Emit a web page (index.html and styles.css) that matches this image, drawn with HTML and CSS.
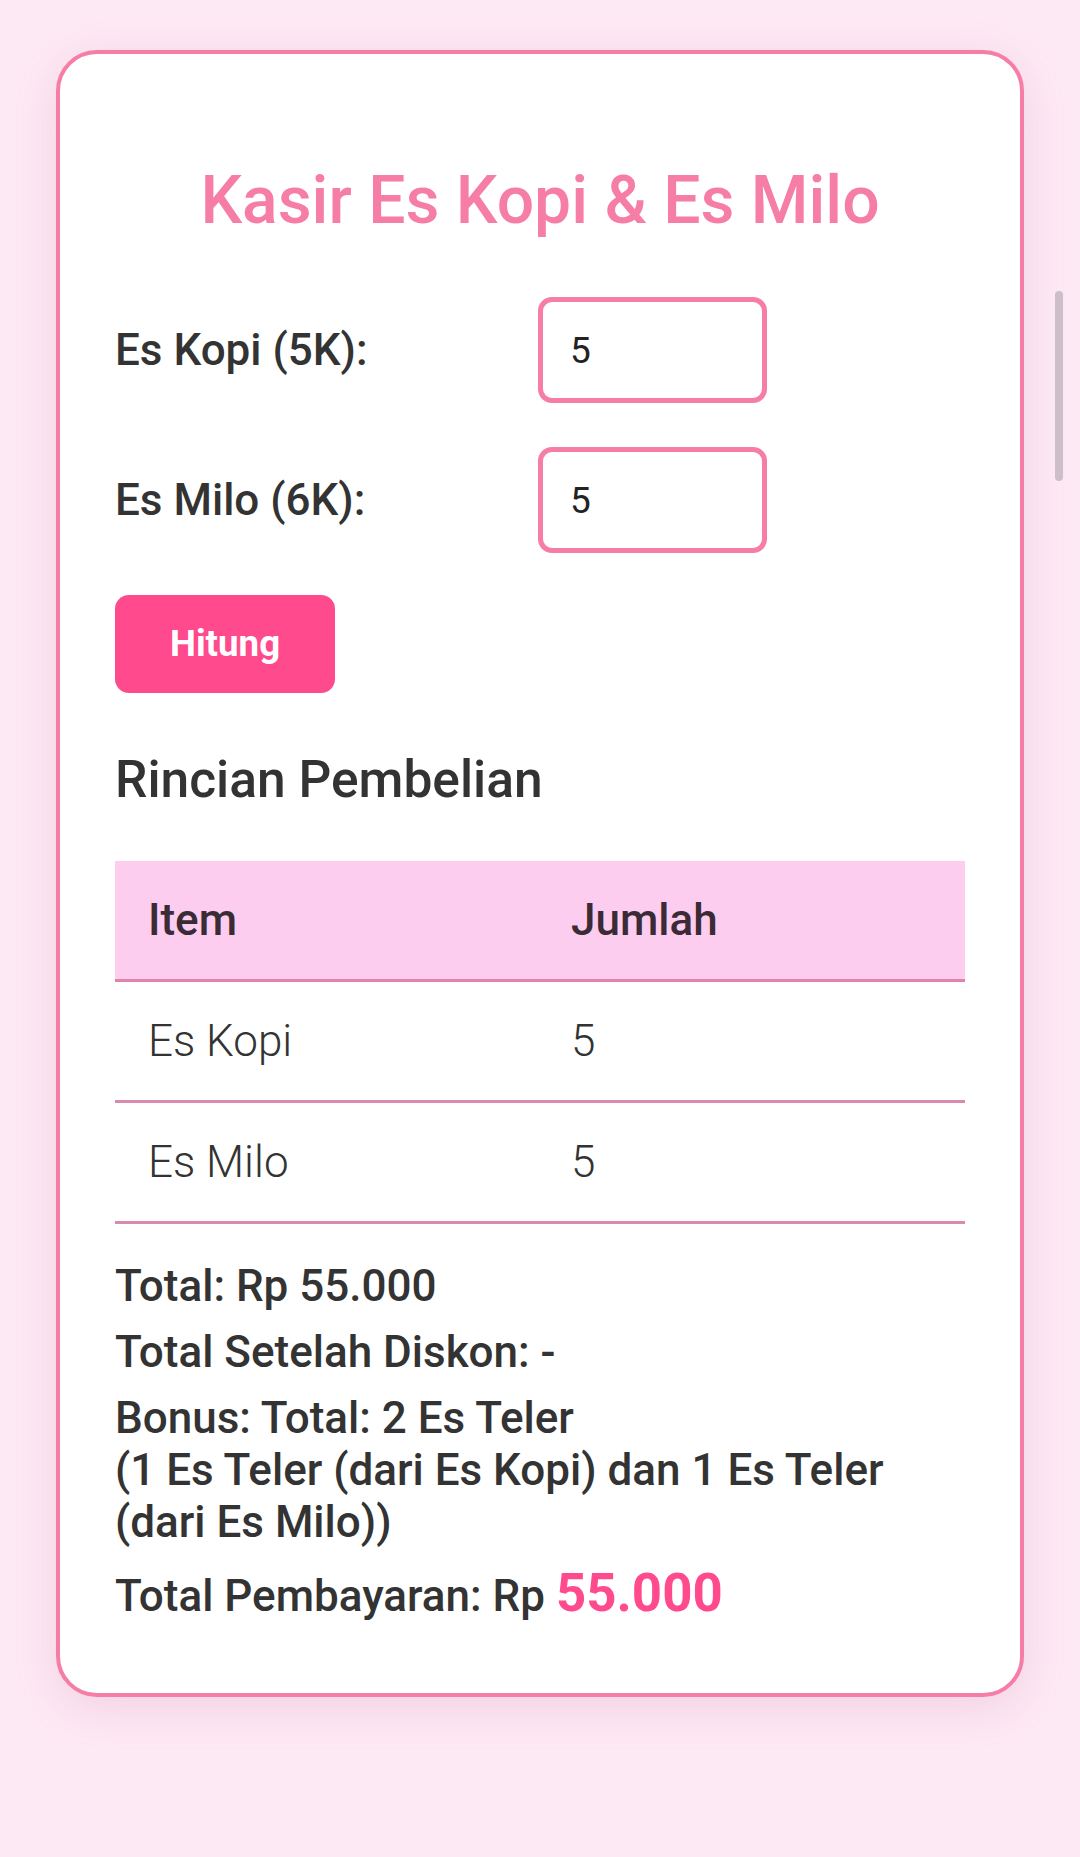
FILE: index.html
```html
<!DOCTYPE html>
<html lang="id">
<head>
<meta charset="utf-8">
<title>Kasir Es Kopi &amp; Es Milo</title>
<link rel="stylesheet" href="styles.css">
</head>
<body>
<div class="page">
  <main class="card">
    <h1 class="title">Kasir Es Kopi &amp; Es Milo</h1>
    <div class="form">
      <label class="label" for="kopi">Es Kopi (5K):</label>
      <input class="qty" id="kopi" type="number" value="5">
      <label class="label" for="milo">Es Milo (6K):</label>
      <input class="qty" id="milo" type="number" value="5">
    </div>
    <button class="btn" type="button">Hitung</button>
    <h3 class="subtitle">Rincian Pembelian</h3>
    <table class="detail">
      <thead>
        <tr><th>Item</th><th>Jumlah</th></tr>
      </thead>
      <tbody>
        <tr><td>Es Kopi</td><td>5</td></tr>
        <tr><td>Es Milo</td><td>5</td></tr>
      </tbody>
    </table>
    <div class="result">
      <p>Total: Rp 55.000</p>
      <p>Total Setelah Diskon: -</p>
      <p>Bonus: Total: 2 Es Teler<br>(1 Es Teler (dari Es Kopi) dan 1 Es Teler (dari Es Milo))</p>
      <p>Total Pembayaran: Rp <span class="grand">55.000</span></p>
    </div>
  </main>
</div>
<div class="scrollbar"></div>
</body>
</html>
```
FILE: styles.css
```css
html, body {
  margin: 0;
  padding: 0;
}
body {
  background: #fde9f4;
  font-family: Roboto, "Noto Sans", "Liberation Sans", sans-serif;
  color: #333333;
  min-height: 1857px;
}
.page {
  padding: 50px 56px 0 56px;
}
.card {
  background: #ffffff;
  border: 4px solid #f67ea6;
  border-radius: 41px;
  padding: 55px;
  box-shadow: 0 11px 44px rgba(190, 90, 140, 0.16);
}
.title {
  margin: 53px 0 58px 0;
  text-align: center;
  font-size: 66px;
  font-weight: 500;
  line-height: normal;
  color: #f67ea6;
}
.form {
  display: grid;
  grid-template-columns: 1fr 1fr;
  align-items: center;
  row-gap: 44px;
}
.label {
  font-size: 44px;
  font-weight: 500;
  color: #333333;
}
.qty {
  box-sizing: border-box;
  width: 229px;
  height: 106px;
  margin: 0 0 0 -2px;
  padding: 0 0 0 27px;
  border: 5px solid #f67ea6;
  border-radius: 14px;
  background: #ffffff;
  font-family: Roboto, "Noto Sans", sans-serif;
  font-size: 37px;
  font-weight: 400;
  color: #222222;
  outline: none;
  -moz-appearance: textfield;
}
.qty::-webkit-outer-spin-button,
.qty::-webkit-inner-spin-button {
  -webkit-appearance: none;
  margin: 0;
}
.btn {
  display: block;
  margin: 42px 0 0 0;
  padding: 27px 55px 28px 55px;
  border: none;
  border-radius: 14px;
  background: #ff4b8e;
  color: #ffffff;
  font-family: Roboto, "Noto Sans", sans-serif;
  font-size: 36.7px;
  font-weight: 700;
  line-height: normal;
}
.subtitle {
  margin: 56px 0 51px 0;
  font-size: 51.5px;
  font-weight: 500;
  line-height: normal;
  color: #333333;
}
.detail {
  width: 100%;
  border-collapse: collapse;
  table-layout: fixed;
  font-size: 44px;
}
.detail th,
.detail td {
  padding: 33px 33px 33px 33px;
  text-align: left;
  line-height: normal;
  border-bottom: 3px solid #d98aae;
}
.detail th {
  background: #fdcdf0;
  font-weight: 500;
  color: #3a2b36;
  border-bottom-color: #e084ac;
}
.detail td {
  font-weight: 300;
  color: #333333;
}
.detail th + th,
.detail td + td {
  padding-left: 31px;
}
.result {
  margin-top: 36px;
}
.result p {
  margin: 14px 0;
  font-size: 44px;
  font-weight: 500;
  line-height: normal;
  color: #333333;
}
.grand {
  font-size: 1.2em;
  font-weight: 700;
  color: #ff4b8e;
}
.scrollbar {
  position: fixed;
  top: 291px;
  right: 17px;
  width: 8px;
  height: 190px;
  border-radius: 4px;
  background: #cdbfca;
}
```
